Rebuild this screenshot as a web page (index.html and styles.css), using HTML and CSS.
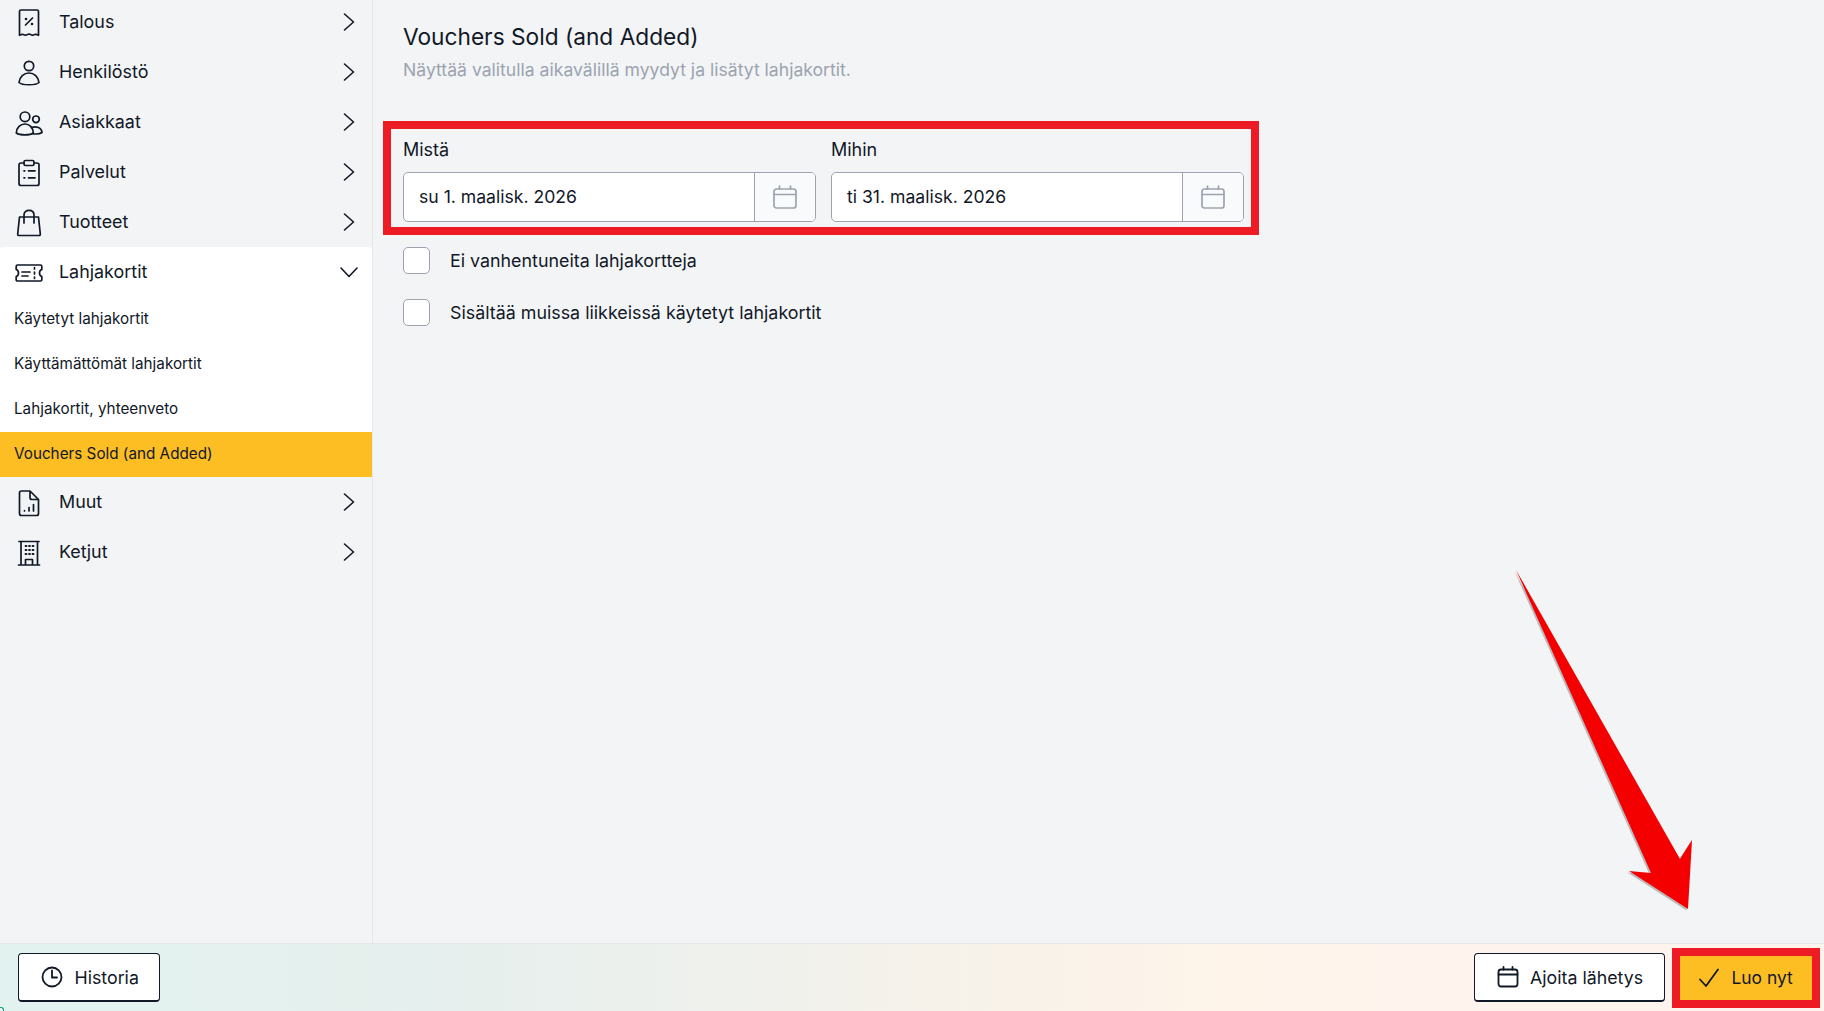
FILE: index.html
```html
<!DOCTYPE html>
<html lang="fi">
<head>
<meta charset="utf-8">
<title>Vouchers Sold (and Added)</title>
<link rel="stylesheet" href="styles.css">
</head>
<body>
<div class="app">
  <div class="main">
    <nav class="sidebar">
      <a class="nav-row"><svg class="nav-icon" viewBox="0 0 30 30"><path d="M5.5 4.500Q5.500 3 7 3H23Q24.500 3 24.500 4.500V28.300L21.800 27.200 18.500 28.300 15 27 11.500 28.300 8.200 27.200 5.500 28.300Z"/><path d="M11.500 18 18.500 11"/><circle class="dot" cx="12" cy="12" r="1.300"/><circle class="dot" cx="18" cy="17" r="1.300"/></svg><span class="nav-label">Talous</span><svg class="chev" viewBox="0 0 30 30"><path d="M10.500 7 19.500 15 10.500 23"/></svg></a>
      <a class="nav-row"><svg class="nav-icon" viewBox="0 0 30 30"><circle cx="15" cy="9" r="4.700"/><path d="M5 25.500C5.500 20 10 16 15 16S24.500 20 25 25.500C22 28.500 8 28.500 5 25.500Z"/></svg><span class="nav-label">Henkilöstö</span><svg class="chev" viewBox="0 0 30 30"><path d="M10.500 7 19.500 15 10.500 23"/></svg></a>
      <a class="nav-row"><svg class="nav-icon" viewBox="0 0 30 30"><circle cx="11" cy="9.800" r="4.800"/><circle cx="22" cy="12.300" r="3.300"/><path d="M2.300 26C2.500 20.500 6.500 17 11 17S19 20.500 19.300 26C16 28.500 6 28.500 2.300 26Z"/><path d="M17.500 20.500C20 19.500 22.500 19.700 24.500 20.500 26.500 21.300 27.800 23 28 25.500 26 27 23 27.300 19.300 26.800"/></svg><span class="nav-label">Asiakkaat</span><svg class="chev" viewBox="0 0 30 30"><path d="M10.500 7 19.500 15 10.500 23"/></svg></a>
      <a class="nav-row"><svg class="nav-icon" viewBox="0 0 30 30"><path d="M10 6H7Q5 6 5 8V26.500Q5 28.500 7 28.500H23Q25 28.500 25 26.500V8Q25 6 23 6H20"/><rect x="10" y="3.500" width="10" height="5" rx="1.500"/><path d="M14.500 13.800H21M14.500 20.800H21M10 13.800H10.800M10 20.800H10.800"/></svg><span class="nav-label">Palvelut</span><svg class="chev" viewBox="0 0 30 30"><path d="M10.500 7 19.500 15 10.500 23"/></svg></a>
      <a class="nav-row"><svg class="nav-icon" viewBox="0 0 30 30"><path d="M5.500 10H24.500L26.300 27Q26.400 28.500 25 28.500H5Q3.600 28.500 3.700 27Z"/><path d="M10 16V8C10 5 12 3.300 15 3.300S20 5 20 8V16"/></svg><span class="nav-label">Tuotteet</span><svg class="chev" viewBox="0 0 30 30"><path d="M10.500 7 19.500 15 10.500 23"/></svg></a>
      <div class="nav-group">
        <a class="nav-row"><svg class="nav-icon" viewBox="0 0 30 30"><path d="M3.500 8H26.500Q27.800 8 27.800 9.300V12.500Q25.500 13.200 25.500 16T27.800 19.500V22.700Q27.800 24 26.500 24H3.500Q2.200 24 2.200 22.700V19.500Q4.500 18.800 4.500 16T2.200 12.500V9.300Q2.200 8 3.500 8Z"/><path d="M8 15H16M8 19H14M20.500 10.500V12M20.500 15V17M20.500 20V21.500"/></svg><span class="nav-label">Lahjakortit</span><svg class="chev" viewBox="0 0 30 30"><path d="M7 11 15 19.500 23 11"/></svg></a>
        <a class="sub-row">Käytetyt lahjakortit</a>
        <a class="sub-row">Käyttämättömät lahjakortit</a>
        <a class="sub-row">Lahjakortit, yhteenveto</a>
        <a class="sub-row is-active">Vouchers Sold (and Added)</a>
      </div>
      <a class="nav-row"><svg class="nav-icon" viewBox="0 0 30 30"><path d="M16 4H7.500Q5.500 4 5.500 6V26.500Q5.500 28.500 7.500 28.500H22.500Q24.500 28.500 24.500 26.500V12.500ZM16 4V10.500Q16 12.500 18 12.500H24.500"/><path d="M10.500 24V23.500M15 24V20.500M19.500 24V17.500"/></svg><span class="nav-label">Muut</span><svg class="chev" viewBox="0 0 30 30"><path d="M10.500 7 19.500 15 10.500 23"/></svg></a>
      <a class="nav-row"><svg class="nav-icon" viewBox="0 0 30 30"><path d="M4.500 28H25.500M5 4.500H25M7 4.500V28M23.500 4.500V28M11.500 28V22.500H18.500V28"/><path class="thin" d="M11.500 9H12.500M15 9H16M18.500 9H19.500M11.500 13H12.500M15 13H16M18.500 13H19.500M11.500 17H12.500M15 17H16M18.500 17H19.500"/></svg><span class="nav-label">Ketjut</span><svg class="chev" viewBox="0 0 30 30"><path d="M10.500 7 19.500 15 10.500 23"/></svg></a>
    </nav>
    <main class="content">
      <h1 class="title">Vouchers Sold (and Added)</h1>
      <p class="subtitle">Näyttää valitulla aikavälillä myydyt ja lisätyt lahjakortit.</p>
      <div class="date-row">
        <div class="field">
          <label class="field-label">Mistä</label>
          <div class="date-input"><span class="date-value">su 1. maalisk. 2026</span><span class="date-addon"><svg class="cal-icon" viewBox="0 0 26 26"><rect x="2" y="5" width="22" height="19" rx="2.500"/><path d="M2 10.500H24M7.500 2V5M18.500 2V5"/></svg></span></div>
        </div>
        <div class="field">
          <label class="field-label">Mihin</label>
          <div class="date-input"><span class="date-value">ti 31. maalisk. 2026</span><span class="date-addon"><svg class="cal-icon" viewBox="0 0 26 26"><rect x="2" y="5" width="22" height="19" rx="2.500"/><path d="M2 10.500H24M7.500 2V5M18.500 2V5"/></svg></span></div>
        </div>
      </div>
      <label class="check-row"><span class="check-box"></span><span>Ei vanhentuneita lahjakortteja</span></label>
      <label class="check-row"><span class="check-box"></span><span>Sisältää muissa liikkeissä käytetyt lahjakortit</span></label>
    </main>
  </div>
  <footer class="footer">
    <button class="btn btn-history"><svg class="btn-icon" viewBox="0 0 24 24"><circle cx="12" cy="12" r="9.500"/><path d="M12 5.500V12.500H17"/></svg>Historia</button>
    <div class="footer-actions">
      <button class="btn"><svg class="btn-icon" viewBox="0 0 24 24"><rect x="2.500" y="4.500" width="19" height="17" rx="2.500"/><path d="M2.500 9.500H21.500M7.500 2V4.500M16.500 2V4.500"/></svg>Ajoita lähetys</button>
      <button class="btn btn-primary"><svg class="btn-icon" viewBox="0 0 24 24"><path d="M3 13.500 9 20 21 3.500"/></svg>Luo nyt</button>
    </div>
  </footer>
  <div class="mark mark-dates"></div>
  <svg class="mark-arrow" viewBox="0 0 200 360"><polygon class="arrow-shadow" points="0,0 135,303 113,301 172,339 176,270 164,289"/><polygon class="arrow-fill" points="0,0 135,303 113,301 172,339 176,270 164,289"/></svg>
</div>
</body>
</html>
```
FILE: styles.css
```css
* { box-sizing: border-box; }
html, body { margin: 0; height: 100%; }
body { font-family: Inter, "Liberation Sans", sans-serif; color: #111827; background: #f3f4f6; overflow: hidden; }
.app { position: relative; display: flex; flex-direction: column; height: 1011px; overflow: hidden; }
.main { flex: 1; display: flex; min-height: 0; }
.sidebar { width: 373px; flex: none; border-right: 1px solid #e5e7eb; margin-top: -3px; }
.nav-row { display: flex; align-items: center; height: 50px; padding: 0 8px 0 14px; font-size: 17.900px; }
.nav-icon { width: 30px; height: 30px; flex: none; fill: none; stroke: #111827; stroke-width: 1.700; stroke-linecap: round; stroke-linejoin: round; }
.nav-icon .dot { fill: #111827; stroke: none; }
.nav-icon .thin { stroke-width: 1.800; }
.nav-label { flex: 1; margin-left: 15px; padding-bottom: 1px; }
.chev { width: 30px; height: 30px; flex: none; fill: none; stroke: #111827; stroke-width: 1.600; stroke-linecap: round; stroke-linejoin: round; }
.nav-group { background: #fff; border-radius: 4px 4px 0 0; }
.sub-row { display: flex; align-items: center; height: 45px; padding: 0 0 2px 14px; font-size: 15.250px; }
.is-active { background: #fdbe23; }
.content { flex: 1; padding: 22px 30px 0; }
.title { margin: 0; font-size: 22.700px; font-weight: 400; line-height: 30px; color: #111827; }
.subtitle { margin: 6px 0 0; font-size: 17.600px; line-height: 24px; color: #9ca3af; }
.date-row { display: flex; gap: 15px; margin-top: 56px; width: 841px; }
.field { width: 413px; }
.field-label { display: block; font-size: 18px; line-height: 24px; margin-bottom: 10px; }
.date-input { display: flex; height: 50px; border: 1px solid #9ca3af; border-radius: 5px; overflow: hidden; background: #fff; }
.date-value { flex: 1; padding-left: 15px; font-size: 17.600px; line-height: 47px; }
.date-addon { width: 61px; flex: none; display: flex; align-items: center; justify-content: center; border-left: 1px solid #9ca3af; background: #f9fafb; }
.cal-icon { width: 26px; height: 26px; fill: none; stroke: #9ca3af; stroke-width: 1.700; stroke-linecap: round; }
.check-row { display: flex; align-items: center; gap: 20px; font-size: 17.850px; height: 27px; margin-top: 25px; }
.check-box { width: 27px; height: 27px; flex: none; border: 1px solid #9ca3af; border-radius: 5px; background: #fff; }
.footer { flex: none; height: 68px; display: flex; align-items: center; justify-content: space-between; padding: 0 12px 0 18px; border-top: 1px solid #e5e7eb; background: radial-gradient(circle 5px at 0 67px, transparent 60%, #16a37f 65%, #16a37f 85%, transparent 90%), linear-gradient(90deg, #e2f3ef 0%, #e6efed 25%, #f0f1ec 42%, #f8f2e9 55%, #fef4ea 68%, #fff3ee 82%, #fff3ee 100%); }
.footer-actions { display: flex; align-items: center; gap: 15px; }
.btn { display: flex; align-items: center; gap: 10.500px; height: 49px; padding: 0 21px; border: 1px solid #111827; border-bottom-width: 2px; border-radius: 4px; background: #fff; color: #111827; font: 400 17.750px Inter, "Liberation Sans", sans-serif; }
.btn-history { padding-right: 20px; }
.btn-icon { width: 24px; height: 24px; flex: none; fill: none; stroke: #111827; stroke-width: 1.800; stroke-linecap: round; stroke-linejoin: round; }
.btn-primary { width: 132px; height: 44px; padding: 0 0 0 17px; gap: 10.500px; border: 0; border-radius: 0; background: #fdbe23; outline: 8px solid #ed1c24; font-size: 17.400px; }
.mark { position: absolute; border: 8px solid #ed1c24; }
.mark-dates { left: 383px; top: 121px; width: 876px; height: 114px; }
.mark-arrow { position: absolute; left: 1516px; top: 570px; width: 200px; height: 360px; overflow: visible; }
.arrow-shadow { fill: #8a8a8a; opacity: .55; transform: translate(-1.500px, 1.500px); }
.arrow-fill { fill: #f40000; }
```
